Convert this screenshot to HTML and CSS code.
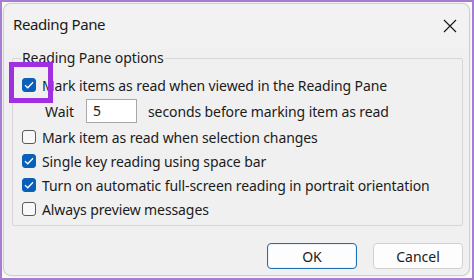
FILE: index.html
```html
<!DOCTYPE html>
<html>
<head>
<meta charset="utf-8">
<link rel="stylesheet" href="styles.css">
</head>
<body>
<div class="frame">
  <div class="dialog">
    <div class="titlebar">
      <span class="title">Reading Pane</span>
      <svg class="close" width="14" height="14" viewBox="0 0 14 14"><path d="M1 1 L13 13 M13 1 L1 13" stroke="#1b1b1b" stroke-width="1.2" fill="none"/></svg>
    </div>
    <div class="body">
      <fieldset class="group">
        <legend>Reading Pane options</legend>
        <div class="row first">
          <span class="cb checked"><svg width="10" height="8" viewBox="0 0 10 8"><path d="M1 4.2 L3.8 6.8 L9 1.3" stroke="#fff" stroke-width="1.3" fill="none"/></svg></span>
          <span>Mark items as read when viewed in the Reading Pane</span>
          <div class="highlight"></div>
        </div>
        <div class="row wait">
          <span class="wait-label">Wait</span>
          <span class="input">5</span>
          <span>seconds before marking item as read</span>
        </div>
        <div class="row">
          <span class="cb"></span>
          <span>Mark item as read when selection changes</span>
        </div>
        <div class="row">
          <span class="cb checked"><svg width="10" height="8" viewBox="0 0 10 8"><path d="M1 4.2 L3.8 6.8 L9 1.3" stroke="#fff" stroke-width="1.3" fill="none"/></svg></span>
          <span>Single key reading using space bar</span>
        </div>
        <div class="row">
          <span class="cb checked"><svg width="10" height="8" viewBox="0 0 10 8"><path d="M1 4.2 L3.8 6.8 L9 1.3" stroke="#fff" stroke-width="1.3" fill="none"/></svg></span>
          <span>Turn on automatic full-screen reading in portrait orientation</span>
        </div>
        <div class="row">
          <span class="cb"></span>
          <span>Always preview messages</span>
        </div>
      </fieldset>
      <div class="buttons">
        <button class="btn default">OK</button>
        <button class="btn">Cancel</button>
      </div>
    </div>
  </div>
</div>
</body>
</html>
```

FILE: styles.css
```css
* { box-sizing: border-box; }
html, body { margin: 0; padding: 0; }
body {
  width: 474px;
  height: 280px;
  overflow: hidden;
  font-family: "Noto Sans", "Open Sans", sans-serif;
  color: #1b1b1b;
}
.frame {
  width: 474px;
  height: 280px;
  border: 2px solid #a57dd3;
  background: #fbfbfb;
  padding: 1px 2px 2px 1px;
}
.dialog {
  width: 467px;
  height: 273px;
  background: #f0f0f0;
  border: 1px solid #cfcfcf;
  border-radius: 8px;
  box-shadow: 0 0 2px rgba(0,0,0,0.15);
  display: flex;
  flex-direction: column;
}
.titlebar {
  height: 45px;
  flex: none;
  display: flex;
  align-items: flex-start;
  justify-content: space-between;
  padding: 10px 12px 0 9px;
  background: #f2f2f2;
  border-radius: 8px 8px 0 0;
}
.title {
  font-size: 15px;
  line-height: 20px;
  letter-spacing: -0.4px;
}
.close { margin-top: 5px; }
.body {
  padding: 0 6px 0 8px;
  display: flex;
  flex-direction: column;
}
.group {
  margin: 0;
  padding: 6px 8px 4px 9px;
  border: 1px solid #d6d6d6;
  border-radius: 2px;
  height: 177px;
  min-width: 0;
}
legend {
  font-size: 14px;
  line-height: 18px;
  padding: 0 1px;
  margin-left: -1px;
  letter-spacing: -0.1px;
}
.row {
  position: relative;
  height: 24px;
  display: flex;
  align-items: center;
  gap: 6px;
  font-size: 14px;
  letter-spacing: -0.1px;
  white-space: nowrap;
}
.row.wait { height: 28px; gap: 0; }
.wait-label { margin-left: 23px; width: 41px; }
.input {
  width: 51px;
  height: 24px;
  background: #fff;
  border: 1px solid #a8a8a8;
  padding-left: 6px;
  line-height: 22px;
  margin-right: 11px;
}
.cb {
  width: 14px;
  height: 14px;
  border: 1px solid #5b5b5b;
  border-radius: 3px;
  background: #f8f8f8;
  display: flex;
  align-items: center;
  justify-content: center;
  flex: none;
}
.cb.checked {
  background: #0a5fb9;
  border-color: #0a5fb9;
}
.highlight {
  position: absolute;
  left: -13px;
  top: -11px;
  width: 44px;
  height: 41px;
  border: 5px solid #a02fe2;
}
.buttons {
  display: flex;
  justify-content: flex-end;
  gap: 16px;
  margin-top: 17px;
}
.btn {
  width: 90px;
  height: 26px;
  font-family: "Noto Sans", "Open Sans", sans-serif;
  font-size: 14px;
  color: #1b1b1b;
  background: #fdfdfd;
  border: 1px solid #d0d0d0;
  border-radius: 4px;
  padding: 0;
}
.btn.default {
  border: 1px solid #1f6fb5;
  box-shadow: inset 0 0 0 1px #e8f0f8;
}
```
